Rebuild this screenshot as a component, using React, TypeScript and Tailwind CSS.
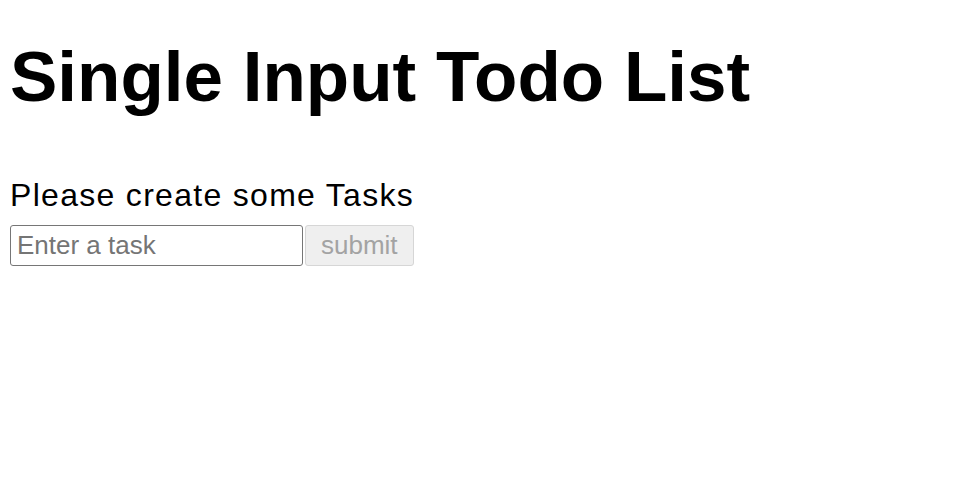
import { useState } from 'react';

export default function App() {
  const [task, setTask] = useState('');

  return (
    <div className="min-h-screen bg-white px-[10px] text-black">
      <h1 className="pt-[41px] text-[71px] font-bold leading-none font-['Liberation_Sans',Arial,sans-serif]">
        Single Input Todo List
      </h1>

      <p className="mt-[67px] text-[32px] leading-none tracking-[1.3px] font-['Liberation_Sans',Arial,sans-serif]">
        Please create some Tasks
      </p>

      <form
        className="mt-[14px] flex items-stretch gap-[2px]"
        onSubmit={(e) => e.preventDefault()}
      >
        <input
          type="text"
          value={task}
          onChange={(e) => setTask(e.target.value)}
          placeholder="Enter a task"
          className="h-[41px] w-[293px] rounded-[3px] border border-[#767676] bg-white pl-[6px] text-[26px] font-['Liberation_Sans',Arial,sans-serif] text-black outline-none placeholder:text-[#757575]"
        />
        <button
          type="submit"
          disabled={!task}
          className="h-[41px] rounded-[3px] border border-[#d6d6d6] bg-[#efefef] px-[15px] text-[26px] font-['Liberation_Sans',Arial,sans-serif] text-[#a3a3a3] disabled:cursor-default"
        >
          submit
        </button>
      </form>
    </div>
  );
}
